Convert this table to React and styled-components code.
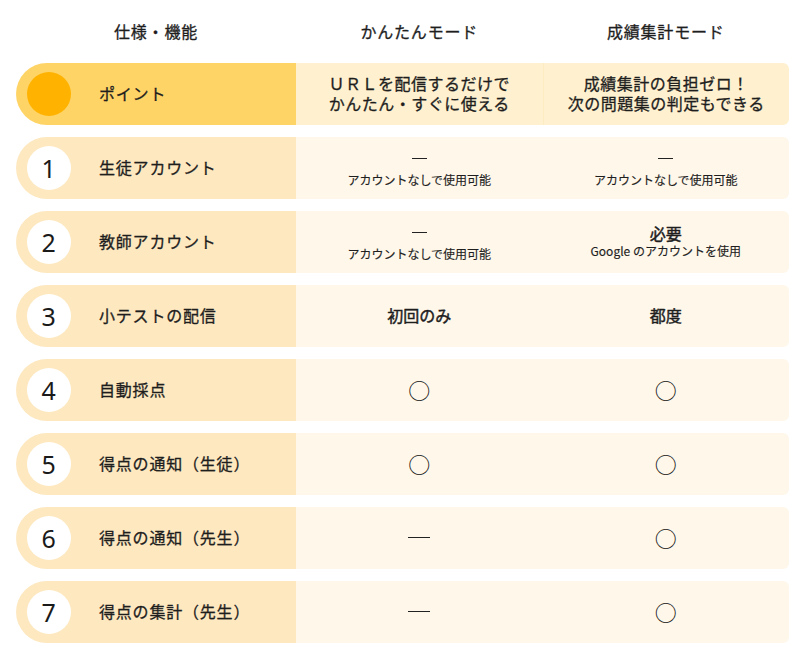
import React from "react";
import styled, { createGlobalStyle, css } from "styled-components";

const GlobalStyle = createGlobalStyle`
  html, body {
    margin: 0;
    padding: 0;
    background: #fff;
  }
  body {
    font-family: "Noto Sans CJK JP", "Noto Sans", sans-serif;
    color: #1e1e1e;
  }
`

const medium = css`
  -webkit-text-stroke: 0.3px currentColor;
`

const Page = styled.div`
  width: 800px;
  padding: 0 11px 0 16px;
  box-sizing: border-box;
`

const HeadRow = styled.div`
  display: grid;
  grid-template-columns: 280px 1fr 1fr;
  height: 63px;
  align-items: center;
`

const HeadCell = styled.div`
  text-align: center;
  font-size: 16px;
  letter-spacing: 0.05em;
  padding-bottom: 2px;
  ${medium}
`

const List = styled.div`
  display: flex;
  flex-direction: column;
  gap: 12px;
`

const Row = styled.div`
  display: grid;
  grid-template-columns: 280px 1fr 1fr;
  height: 62px;
`

const Label = styled.div`
  display: flex;
  align-items: center;
  gap: 28px;
  padding-left: 11px;
  border-radius: 31px 0 0 31px;
  background: ${(p) => (p.$point ? "#ffd466" : "#fde8c0")};
  font-size: 16px;
  letter-spacing: 0.05em;
`

const LabelText = styled.span`
  padding-bottom: 3px;
  ${medium}
`

const Badge = styled.div`
  width: 44px;
  height: 44px;
  border-radius: 50%;
  flex-shrink: 0;
  display: flex;
  align-items: center;
  justify-content: center;
  background: ${(p) => (p.$point ? "#ffb300" : "#fff")};
  font-family: "Noto Sans", sans-serif;
  font-size: 25px;
  line-height: 1;
  color: #1a1a1a;
`

const Cell = styled.div`
  display: flex;
  flex-direction: column;
  align-items: center;
  justify-content: center;
  text-align: center;
  padding-bottom: 2px;
  box-sizing: border-box;
  background: ${(p) => (p.$point ? "#fff1cf" : "#fef7ea")};
  ${(p) =>
    p.$last &&
    css`
      border-radius: 0 6px 6px 0;
    `}
  ${(p) =>
    p.$point &&
    p.$last &&
    css`
      border-left: 1px solid #fdebc2;
    `}
`

const PointLine = styled.div`
  font-size: 16px;
  line-height: 20px;
  letter-spacing: 0.03em;
  ${medium}
`

const Main = styled.div`
  font-size: 16px;
  line-height: 20px;
  -webkit-text-stroke: 0.45px currentColor;
`

const Small = styled.div`
  font-size: 12px;
  line-height: 16px;
  -webkit-text-stroke: 0.15px currentColor;
`

const Dash = styled.div`
  width: ${(p) => (p.$big ? "22px" : "15px")};
  height: 1px;
  background: #222;
  margin: ${(p) => (p.$big ? "0" : "11px 0 13px")};
`

const Mark = styled.div`
  font-size: 22px;
  line-height: 1;
  color: #111;
`

const Value = ({ v }) => {
  if (v === "o") return <Mark>○</Mark>
  if (v === "-") return <Dash $big />
  if (v === "none")
    return (
      <>
        <Dash />
        <Small>アカウントなしで使用可能</Small>
      </>
    )
  if (v === "google")
    return (
      <>
        <Main>必要</Main>
        <Small>Google のアカウントを使用</Small>
      </>
    )
  return <Main>{v}</Main>
}

const rows = [
  { n: "1", label: "生徒アカウント", a: "none", b: "none" },
  { n: "2", label: "教師アカウント", a: "none", b: "google" },
  { n: "3", label: "小テストの配信", a: "初回のみ", b: "都度" },
  { n: "4", label: "自動採点", a: "o", b: "o" },
  { n: "5", label: "得点の通知（生徒）", a: "o", b: "o" },
  { n: "6", label: "得点の通知（先生）", a: "-", b: "o" },
  { n: "7", label: "得点の集計（先生）", a: "-", b: "o" },
]

export default function App() {
  return (
    <Page>
      <GlobalStyle />
      <HeadRow>
        <HeadCell>仕様・機能</HeadCell>
        <HeadCell>かんたんモード</HeadCell>
        <HeadCell>成績集計モード</HeadCell>
      </HeadRow>
      <List>
        <Row>
          <Label $point>
            <Badge $point />
            <LabelText>ポイント</LabelText>
          </Label>
          <Cell $point>
            <PointLine>ＵＲＬを配信するだけで</PointLine>
            <PointLine>かんたん・すぐに使える</PointLine>
          </Cell>
          <Cell $point $last>
            <PointLine>成績集計の負担ゼロ！</PointLine>
            <PointLine>次の問題集の判定もできる</PointLine>
          </Cell>
        </Row>
        {rows.map((r) => (
          <Row key={r.n}>
            <Label>
              <Badge>{r.n}</Badge>
              <LabelText>{r.label}</LabelText>
            </Label>
            <Cell>
              <Value v={r.a} />
            </Cell>
            <Cell $last>
              <Value v={r.b} />
            </Cell>
          </Row>
        ))}
      </List>
    </Page>
  )
}
